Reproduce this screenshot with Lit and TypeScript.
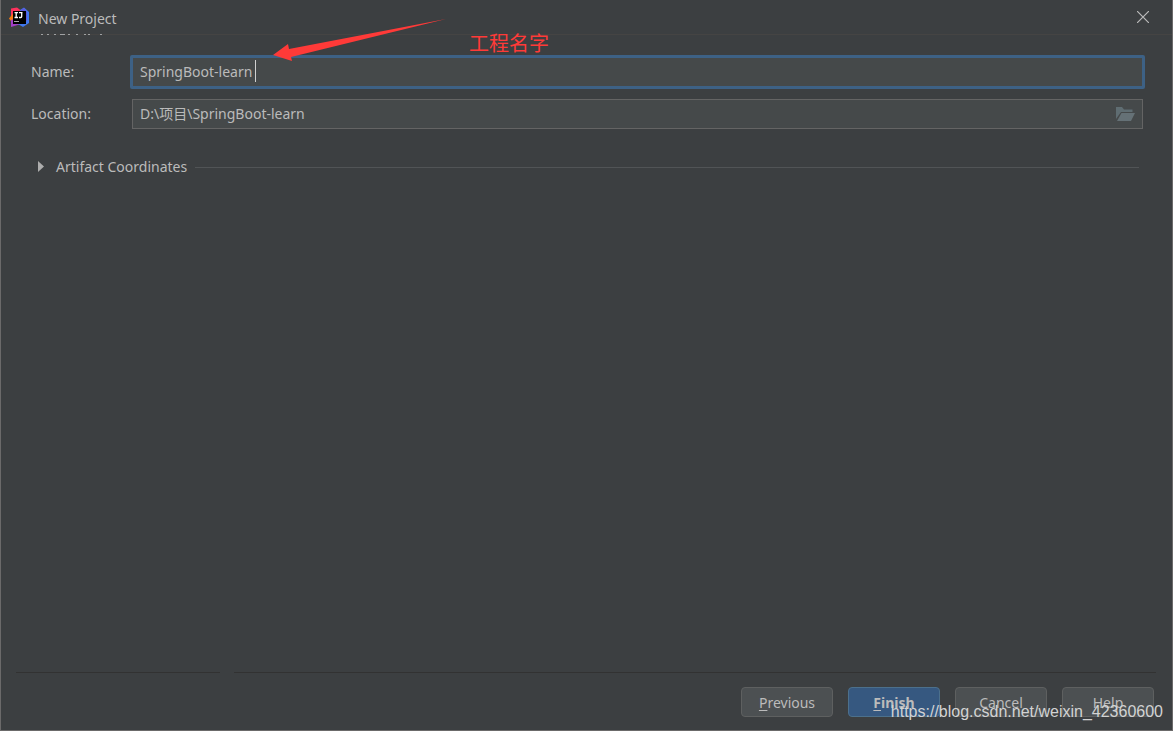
import { LitElement, html, css } from "lit";
import { customElement, state } from "lit/decorators.js";

@customElement("app-root")
export class AppRoot extends LitElement {
  @state() private name = "SpringBoot-learn";
  @state() private location = "D:\\项目\\SpringBoot-learn";

  static styles = css`
    :host {
      display: block;
      color: #bbbbbb;
      font: 14px/20px "Noto Sans", "Noto Sans CJK SC", sans-serif;
    }
    * { box-sizing: border-box; }
    .dialog {
      position: relative;
      display: flex;
      flex-direction: column;
      min-height: 100vh;
      background: #3c3f41;
      border: 1px solid #6b6a6a;
      border-top: 0;
    }
    .title {
      display: flex;
      align-items: center;
      gap: 8px;
      height: 35px;
      padding: 0 23px 0 8px;
      border-bottom: 1px solid #454443;
    }
    .title h1 { flex: 1; margin: 0; padding-top: 3px; font-size: 14px; font-weight: 400; }
    .title button { padding: 0; border: 0; background: none; color: #bbbbbb; display: flex; }
    .remnant { display: block; height: 4px; margin: -1px 0 0 39px; }
    svg { display: block; }
    .form {
      display: grid;
      grid-template-columns: 99px 1fr;
      row-gap: 10px;
      align-items: center;
      padding: 17px 27px 0 30px;
    }
    input, button { font-size: 14px; }
    .field { position: relative; display: flex; }
    input {
      width: 100%;
      height: 30px;
      margin: 0 2px;
      padding: 0 7px 2px;
      border: 1px solid #646464;
      background: #45494a;
      color: #bbbbbb;
      font-family: inherit;
      outline: none;
    }
    .focused input { height: 34px; margin: 0; border: 3px solid #3d6185; border-radius: 2px; }
    .caret { position: absolute; left: 125px; top: 5px; width: 1px; height: 22px; background: #d0d0d0; }
    .browse { position: absolute; right: 10px; top: 8px; padding: 0; border: 0; background: none; }
    .section { display: flex; align-items: center; gap: 8px; margin: 28px 33px 0 35px; }
    .section button {
      display: flex; align-items: center; gap: 12px; padding: 0; border: 0;
      background: none; color: inherit; font-family: inherit; line-height: 20px;
    }
    .rule { flex: 1; height: 1px; background: #515456; }
    footer { margin-top: auto; }
    .lines { display: grid; grid-template-columns: 204px 1fr; gap: 14px; padding: 0 16px 0 15px; }
    .lines i { height: 1px; background: #323232; }
    .actions { display: flex; justify-content: flex-end; gap: 15px; padding: 14px 18px 13px; }
    .actions button {
      width: 92px; height: 30px; padding: 0; border: 1px solid #5e6060; border-radius: 4px;
      background: #4c5052; color: #bbbbbb; font-family: inherit;
    }
    .actions .primary { background: #365880; border-color: #4c708c; font-weight: 700; }
    u { text-underline-offset: 2px; text-decoration-thickness: 1px; }
    .arrow { position: absolute; left: 271px; top: 18px; }
    .note { position: absolute; left: 468px; top: 29px; color: #ff3a38; font: 20px/28px "Noto Sans CJK SC", sans-serif; }
    .watermark { position: absolute; right: 9px; bottom: 8px; color: #d2d3d3; font: 16px/20px "Liberation Sans", sans-serif; }
  `;

  render() {
    return html`
      <main class="dialog">
        <header class="title">
          <svg width="21" height="21" viewBox="0 0 21 21" aria-hidden="true">
            <path d="M2 1.500L8 .5l4 3-6 9-4-4z" fill="#fe315d" />
            <path d="M0 11.500l4-5 3 5-4 4z" fill="#f97a12" />
            <path d="M2 13l8-3 2 7-10 3z" fill="#a33fc5" />
            <path d="M11 3l4-2.500 5 4.500v11l-6 4-5-3 5-3z" fill="#3f78f0" />
            <path d="M12 3l3-2 3 4v9l-5 2z" fill="#6057dc" />
            <rect x="4" y="4" width="13" height="13" fill="#000" />
            <path d="M5.500 5.700h3.500M7.200 6v4.500M5.500 10.500h3.500M10 5.700h3.500M12.700 6v3.500q0 1-1 1h-1.700" fill="none" stroke="#fff" stroke-width="1.300" />
            <path d="M5 14.500h5" stroke="#aaa" />
          </svg>
          <h1>New Project</h1>
          <button aria-label="Close">
            <svg width="12" height="12" viewBox="0 0 12 12"><path d="M0 0l12 12M12 0L0 12" stroke="currentColor" stroke-width="1.200" /></svg>
          </button>
        </header>
        <svg class="remnant" width="64" height="4" viewBox="0 0 64 4" aria-hidden="true">
          <path d="M1 .5h2M7 .5h2M14 .5h2M20 .5h5M28 .5h2M36 .5h2M44 .5h2M48 .5h2M60 .5h2" stroke="#a0a2a3" />
        </svg>
        <form class="form" @submit=${(e: Event) => e.preventDefault()}>
          <label for="name">Name:</label>
          <div class="field focused">
            <input id="name" spellcheck="false" .value=${this.name}
              @input=${(e: Event) => (this.name = (e.target as HTMLInputElement).value)} />
            <span class="caret"></span>
          </div>
          <label for="location">Location:</label>
          <div class="field">
            <input id="location" spellcheck="false" .value=${this.location}
              @input=${(e: Event) => (this.location = (e.target as HTMLInputElement).value)} />
            <button class="browse" type="button" aria-label="Browse">
              <svg width="19" height="14" viewBox="0 0 19 14"><path d="M0 0h6l2 2.500h8.500V5H5L0 12z" fill="#5f6d72" /><path d="M5.500 6H19l-4 8H1z" fill="#657176" /></svg>
            </button>
          </div>
        </form>
        <section class="section">
          <button aria-expanded="false">
            <svg width="8" height="12" viewBox="0 0 8 12"><path d="M2 0l6 5.500-6 5.500z" fill="#adadad" /></svg>
            Artifact Coordinates
          </button>
          <span class="rule"></span>
        </section>
        <footer>
          <div class="lines"><i></i><i></i></div>
          <div class="actions">
            <button><u>P</u>revious</button>
            <button class="primary"><u>F</u>inish</button>
            <button>Cancel</button>
            <button>Help</button>
          </div>
        </footer>
        <svg class="arrow" width="175" height="44" viewBox="0 0 175 44" aria-hidden="true">
          <path d="M1 37L16 26l1 5L174 1 19 39l1 4z" fill="#ff3a38" />
        </svg>
        <span class="note">工程名字</span>
        <span class="watermark">https://blog.csdn.net/weixin_42360600</span>
      </main>
    `;
  }
}
